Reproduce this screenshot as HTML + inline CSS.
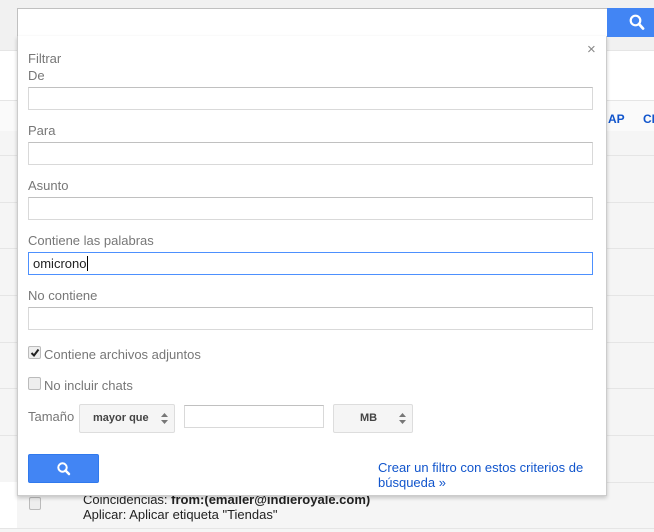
<!DOCTYPE html>
<html><head><meta charset="utf-8"><style>
*{box-sizing:border-box;margin:0;padding:0}
body{width:654px;height:532px;position:relative;overflow:hidden;background:#f5f5f5;font-family:"Liberation Sans",Arial,sans-serif;font-size:13px;color:#222}
.a{position:absolute}
.sep{position:absolute;left:0;width:654px;height:1px;background:#e5e5e5}
.lbl{position:absolute;left:28px;color:#777;font-size:13px}
.inp{position:absolute;left:28px;width:565px;height:23px;border:1px solid #d9d9d9;border-top-color:#c0c0c0;background:#fff}
.cb{position:absolute;left:28px;width:13px;height:13px;border:1px solid #bbb;border-radius:2px;background:#eee}
.sel{position:absolute;top:404px;height:29px;background:#f5f5f5;border:1px solid #ddd;border-radius:2px;font-weight:bold;font-size:11px;color:#444;line-height:27px}
</style></head><body>
<div class="a" style="left:0;top:0;width:654px;height:51px;background:#f1f1f1;border-bottom:1px solid #e5e5e5"></div>
<div class="a" style="left:0;top:51px;width:654px;height:50px;background:#fff;border-bottom:1px solid #e5e5e5"></div>
<div class="a" style="left:0;top:101px;width:654px;height:30px;background:#fafafa"></div>
<div class="a" style="left:608px;top:112px;color:#15c;font-weight:bold;font-size:12px">AP</div>
<div class="a" style="left:643px;top:112px;color:#15c;font-weight:bold;font-size:12px">CI</div>
<div class="sep" style="top:155px"></div><div class="sep" style="top:202px"></div><div class="sep" style="top:248px"></div><div class="sep" style="top:295px"></div><div class="sep" style="top:342px"></div><div class="sep" style="top:388px"></div><div class="sep" style="top:435px"></div><div class="sep" style="top:482px"></div><div class="sep" style="top:528px"></div>
<div class="a" style="left:0;top:482px;width:17px;height:46px;background:#fff"></div>
<div class="cb" style="top:497px;left:29px;width:12px;height:13px"></div>
<div class="a" style="left:83px;top:492px;font-size:13px">Coincidencias: <b>from:(emailer@indieroyale.com)</b></div>
<div class="a" style="left:83px;top:507px;font-size:13px">Aplicar: Aplicar etiqueta "Tiendas"</div>

<div class="a" style="left:17px;top:8px;width:591px;height:29px;background:#fff;border:1px solid #c0c0c0;border-right:none"></div>
<div class="a" style="left:607px;top:8px;width:47px;height:29px;background:#4285f4">
<svg width="47" height="29"><circle cx="28.5" cy="12.5" r="4.8" fill="none" stroke="#fff" stroke-width="2.2"/><line x1="32" y1="16" x2="36" y2="20.5" stroke="#fff" stroke-width="2.8" stroke-linecap="round"/></svg></div>

<div class="a" style="left:17px;top:36px;width:590px;height:460px;background:#fff;border:1px solid #ccc;border-top:none;box-shadow:0 2px 4px rgba(0,0,0,.2)"></div>
<div class="a" style="left:587px;top:41px;color:#888;font-size:15px">×</div>
<div class="lbl" style="top:51px">Filtrar</div>
<div class="lbl" style="top:68px">De</div>
<div class="inp" style="top:87px"></div>
<div class="lbl" style="top:123px">Para</div>
<div class="inp" style="top:142px"></div>
<div class="lbl" style="top:178px">Asunto</div>
<div class="inp" style="top:197px"></div>
<div class="lbl" style="top:233px">Contiene las palabras</div>
<div class="inp" style="top:252px;border:1px solid #4d90fe;padding:3px 0 0 4px;font-size:13px;color:#222">omicrono<span style="border-left:1px solid #000;margin-left:1px"></span></div>
<div class="lbl" style="top:288px">No contiene</div>
<div class="inp" style="top:307px"></div>
<div class="cb" style="top:346px"><svg class="a" style="left:1px;top:1px" width="10" height="10"><path d="M1.5 5 L4 7.5 L8.5 1.5" fill="none" stroke="#222" stroke-width="2"/></svg></div>
<div class="lbl" style="top:347px;left:44px">Contiene archivos adjuntos</div>
<div class="cb" style="top:377px"></div>
<div class="lbl" style="top:378px;left:44px">No incluir chats</div>
<div class="lbl" style="top:409px">Tamaño</div>
<div class="sel" style="left:79px;width:96px;padding-left:13px">mayor que<svg class="a" style="right:6px;top:8px" width="7" height="11"><path d="M0 4 L3.5 0 L7 4Z M0 7 L3.5 11 L7 7Z" fill="#777"/></svg></div>
<div class="a" style="left:184px;top:405px;width:140px;height:23px;border:1px solid #d9d9d9;border-top-color:#c0c0c0"></div>
<div class="sel" style="left:333px;width:80px;padding-left:26px">MB<svg class="a" style="right:6px;top:8px" width="7" height="11"><path d="M0 4 L3.5 0 L7 4Z M0 7 L3.5 11 L7 7Z" fill="#777"/></svg></div>
<div class="a" style="left:28px;top:454px;width:71px;height:29px;background:#4285f4;border:1px solid #3079ed;border-radius:2px">
<svg width="71" height="29"><circle cx="33.5" cy="12.5" r="4.2" fill="none" stroke="#fff" stroke-width="2"/><line x1="36.5" y1="15.5" x2="40" y2="19" stroke="#fff" stroke-width="2.5" stroke-linecap="round"/></svg></div>
<div class="a" style="left:378px;top:460px;color:#15c;font-size:13px;line-height:15px">Crear un filtro con estos criterios de<br>búsqueda »</div>
</body></html>
